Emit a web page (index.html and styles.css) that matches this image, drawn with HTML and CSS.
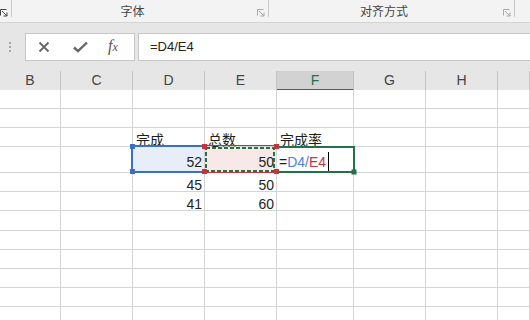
FILE: index.html
```html
<!DOCTYPE html>
<html lang="zh-CN">
<head>
<meta charset="utf-8">
<title>Excel</title>
<link rel="stylesheet" href="styles.css">
</head>
<body>
<div class="app">
  <div class="ribbon">
    <div class="rgroup g0">
      <svg class="launcher dark" width="8" height="8" viewBox="0 0 8 8"><path d="M0.5 6.5V0.5H6.5" fill="none" stroke="currentColor"/><path d="M2 2L7 7M7 3.5V7H3.5" fill="none" stroke="currentColor"/></svg>
    </div>
    <div class="rgroup g1">
      <span class="rlabel">字体</span>
      <svg class="launcher" width="8" height="8" viewBox="0 0 8 8"><path d="M0.5 6.5V0.5H6.5" fill="none" stroke="currentColor"/><path d="M2 2L7 7M7 3.5V7H3.5" fill="none" stroke="currentColor"/></svg>
    </div>
    <div class="rgroup g2">
      <span class="rlabel">对齐方式</span>
      <svg class="launcher" width="8" height="8" viewBox="0 0 8 8"><path d="M0.5 6.5V0.5H6.5" fill="none" stroke="currentColor"/><path d="M2 2L7 7M7 3.5V7H3.5" fill="none" stroke="currentColor"/></svg>
    </div>
  </div>

  <div class="fbar">
    <div class="grip"><span></span><span></span><span></span></div>
    <div class="fbtns">
      <svg class="ico" width="12" height="12" viewBox="0 0 12 12"><path d="M1.5 1.5L10.5 10.5M10.5 1.5L1.5 10.5" stroke="#666" stroke-width="1.8" fill="none"/></svg>
      <svg class="ico" width="15" height="12" viewBox="0 0 15 12"><path d="M1 6.5L5 10.2L14 1.5" stroke="#666" stroke-width="2.4" fill="none"/></svg>
      <span class="fx"><i>f</i><i class="fxx">x</i></span>
    </div>
    <div class="finput">=D4/E4</div>
  </div>

  <div class="colhead">
    <div class="h">B</div>
    <div class="h">C</div>
    <div class="h">D</div>
    <div class="h">E</div>
    <div class="h hsel">F</div>
    <div class="h">G</div>
    <div class="h">H</div>
    <div class="h"></div>
  </div>

  <div class="sheet">
    <div class="c"></div><div class="c"></div><div class="c"></div><div class="c"></div><div class="c"></div><div class="c"></div><div class="c"></div><div class="c"></div>
    <div class="c"></div><div class="c"></div><div class="c"></div><div class="c"></div><div class="c"></div><div class="c"></div><div class="c"></div><div class="c"></div>
    <div class="c"></div><div class="c"></div><div class="c t">完成</div><div class="c t">总数</div><div class="c t">完成率</div><div class="c"></div><div class="c"></div><div class="c"></div>
    <div class="c"></div><div class="c"></div><div class="c n tall sel-d">52</div><div class="c n tall sel-e">50</div><div class="c tall edit"><span class="op">=</span><span class="rd">D4</span><span class="sl">/</span><span class="re">E4</span><span class="caret"></span></div><div class="c"></div><div class="c"></div><div class="c"></div>
    <div class="c"></div><div class="c"></div><div class="c n">45</div><div class="c n">50</div><div class="c"></div><div class="c"></div><div class="c"></div><div class="c"></div>
    <div class="c"></div><div class="c"></div><div class="c n">41</div><div class="c n">60</div><div class="c"></div><div class="c"></div><div class="c"></div><div class="c"></div>
    <div class="c"></div><div class="c"></div><div class="c"></div><div class="c"></div><div class="c"></div><div class="c"></div><div class="c"></div><div class="c"></div>
    <div class="c"></div><div class="c"></div><div class="c"></div><div class="c"></div><div class="c"></div><div class="c"></div><div class="c"></div><div class="c"></div>
    <div class="c"></div><div class="c"></div><div class="c"></div><div class="c"></div><div class="c"></div><div class="c"></div><div class="c"></div><div class="c"></div>
    <div class="c"></div><div class="c"></div><div class="c"></div><div class="c"></div><div class="c"></div><div class="c"></div><div class="c"></div><div class="c"></div>
    <div class="c"></div><div class="c"></div><div class="c"></div><div class="c"></div><div class="c"></div><div class="c"></div><div class="c"></div><div class="c"></div>
    <div class="c"></div><div class="c"></div><div class="c"></div><div class="c"></div><div class="c"></div><div class="c"></div><div class="c"></div><div class="c"></div>

    <svg class="marks" width="530" height="230" viewBox="0 90 530 230">
      <path d="M204 146H132V172H204" fill="none" stroke="#3b6fc6" stroke-width="2"/>
      <path d="M204 145.5H276M204 172.5H276" fill="none" stroke="#c4343c" stroke-width="1"/>
      <rect x="206" y="148" width="68" height="23" fill="none" stroke="#217346" stroke-width="2" stroke-dasharray="4 2"/>
      <path d="M276 147H354V172H276" fill="none" stroke="#217346" stroke-width="2"/>
      <rect x="130" y="144" width="5" height="5" fill="#3b6fc6"/>
      <rect x="130" y="169" width="5" height="5" fill="#3b6fc6"/>
      <rect x="202" y="144" width="5" height="5" fill="#c4343c"/>
      <rect x="202" y="169" width="5" height="5" fill="#c4343c"/>
      <rect x="274" y="144" width="5" height="5" fill="#c4343c"/>
      <rect x="274" y="169" width="5" height="5" fill="#c4343c"/>
      <rect x="351.5" y="169.5" width="5" height="5" fill="#217346"/>
    </svg>
  </div>
</div>
</body>
</html>
```

FILE: styles.css
```css
* { box-sizing: border-box; }
html, body { margin: 0; padding: 0; }
body {
  width: 530px;
  height: 320px;
  overflow: hidden;
  background: #e6e6e6;
  font-family: "Liberation Sans", "Noto Sans CJK SC", sans-serif;
  color: #262626;
}
.app { width: 530px; height: 320px; overflow: hidden; }

/* ribbon */
.ribbon {
  height: 23px;
  background: #f3f3f3;
  border-bottom: 1px solid #d4d4d4;
  display: flex;
  align-items: flex-start;
}
.rgroup {
  height: 17px;
  display: flex;
  align-items: flex-end;
  border-right: 1px solid #c8c8c8;
}
.g0 { width: 12px; }
.g1 { width: 257px; }
.g2 { width: 246px; }
.rlabel {
  flex: 1;
  text-align: center;
  font-family: "Noto Sans CJK SC", sans-serif;
  font-size: 12px;
  line-height: 12px;
  color: #444;
  padding-right: 4px;
}
.launcher { color: #a8a8a8; margin: 0 3px 0 0; flex: none; }
.launcher.dark { color: #444; }

/* formula bar */
.fbar {
  display: flex;
  height: 28px;
  margin-top: 10px;
}
.grip {
  width: 25px;
  display: flex;
  flex-direction: column;
  align-items: flex-start;
  padding: 9px 0 0 9px;
  gap: 2px;
}
.grip span { width: 2px; height: 2px; background: #a6a6a6; }
.fbtns {
  width: 110px;
  background: #fff;
  border: 1px solid #c6c6c6;
  display: flex;
  align-items: center;
  padding-left: 12px;
}
.ico { flex: none; }
.fbtns .ico:first-child { margin-right: 23px; }
.fbtns .ico + .ico { margin-right: 20px; }
.fx {
  font-family: "Liberation Serif", serif;
  font-size: 16px;
  line-height: 16px;
  color: #555;
  margin-top: -1px;
}
.fx i { font-style: italic; }
.fxx { font-size: 12px; margin-left: 0; }
.finput {
  flex: 1;
  margin-left: 3px;
  margin-right: -2px;
  background: #fff;
  border: 1px solid #c6c6c6;
  padding-left: 11px;
  font-size: 13px;
  line-height: 26px;
  color: #222;
}

/* column headers */
.colhead {
  margin-top: 10px;
  height: 19px;
  display: grid;
  grid-template-columns: 61px 72px 72px 72px 77px 72px 72px 1fr;
}
.h {
  border-right: 1px solid #c4c4c4;
  border-bottom: 1px solid #bdbdbd;
  text-align: center;
  font-size: 14px;
  line-height: 18px;
  color: #444;
}
.hsel {
  background: #d2d2d2;
  border-bottom: 2px solid #217346;
  color: #217346;
}

/* sheet */
.sheet {
  position: relative;
  background: #fff;
  display: grid;
  grid-template-columns: 61px 72px 72px 72px 77px 72px 72px 1fr;
  grid-template-rows: 19px 19px 19px 26px repeat(8, 19.2px);
}
.c {
  border-right: 1px solid #d4d4d4;
  border-bottom: 1px solid #d4d4d4;
  display: flex;
  align-items: flex-end;
  font-size: 14px;
  line-height: 12px;
  padding: 0 3px;
  white-space: nowrap;
  color: #1e1e1e;
}
.t {
  font-family: "Noto Sans CJK SC", sans-serif;
  font-size: 14px;
  padding-bottom: 1px;
}
.n { justify-content: flex-end; padding-right: 2px; }
.tall { padding-bottom: 4px; }
.sel-d { background: #e8eef8; }
.sel-e { background: #f9e8e8; }
.edit { padding-left: 2px; padding-bottom: 3px; line-height: 14px; position: relative; z-index: 2; }
.op { color: #222; }
.rd { color: #4f81d9; }
.sl { color: #6b6fc6; }
.re { color: #c9324a; }
.caret {
  display: inline-block;
  width: 1px;
  height: 19px;
  background: #000;
  margin-left: 2px;
  margin-bottom: -2px;
}
.marks {
  position: absolute;
  left: 0;
  top: 0;
  pointer-events: none;
  z-index: 3;
}
```
